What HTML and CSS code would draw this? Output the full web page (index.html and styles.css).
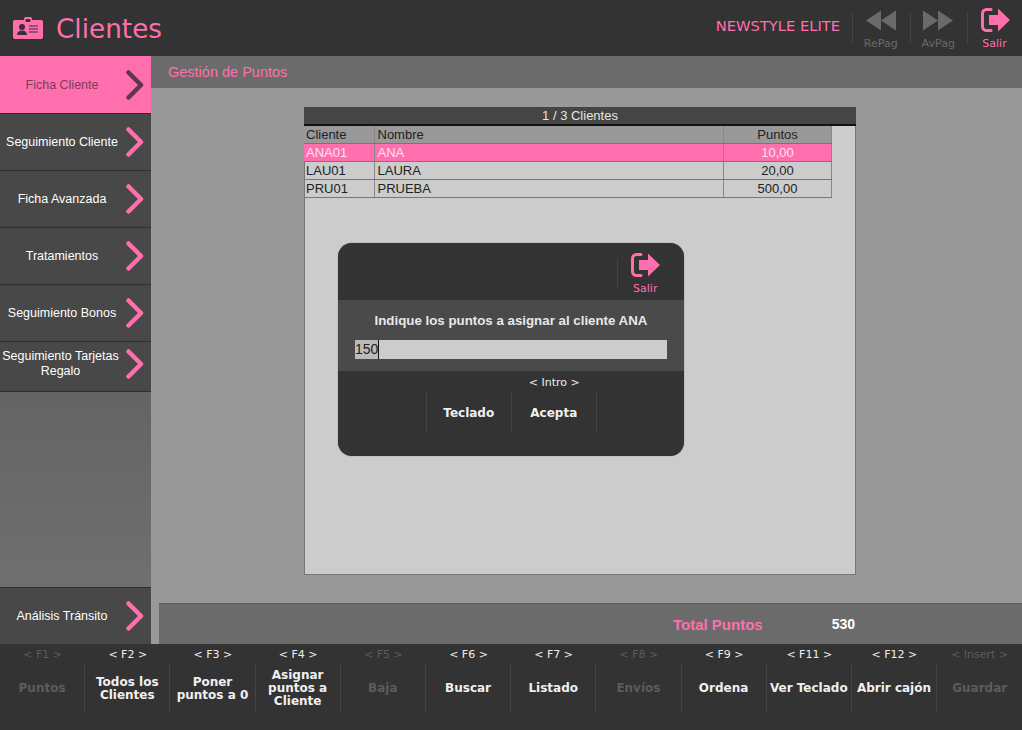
FILE: index.html
```html
<!DOCTYPE html>
<html lang="es">
<head>
    <meta charset="UTF-8">
    <title>Clientes</title>
    <link rel="stylesheet" href="styles.css">
</head>
<body>
    <svg class="defs" width="0" height="0" aria-hidden="true">
        <symbol id="exit" viewBox="0 0 30 26">
            <path d="M11 2.5H6.5A4 4 0 0 0 2.5 6.5v13a4 4 0 0 0 4 4H11" fill="none" stroke="currentColor" stroke-width="3" stroke-linecap="round"/>
            <path d="M9 8h9V1.5L30 13 18 24.5V18H9z" fill="currentColor"/>
        </symbol>
        <symbol id="chevron" viewBox="0 0 18 30">
            <path d="M2.5 2.500L15 15 2.500 27.500" fill="none" stroke="currentColor" stroke-width="4.500" stroke-linecap="round" stroke-linejoin="round"/>
        </symbol>
    </svg>

    <header class="topbar">
        <svg class="card-icon" viewBox="0 0 30 24" aria-hidden="true">
            <path d="M2 4h9V3a2 2 0 0 1 2-2h4a2 2 0 0 1 2 2v1h9a2 2 0 0 1 2 2v15a2 2 0 0 1-2 2H2a2 2 0 0 1-2-2V6a2 2 0 0 1 2-2z" fill="#ff6fae"/>
            <rect x="12.500" y="3" width="5" height="3" rx="1" fill="#333"/>
            <circle cx="9" cy="11" r="3" fill="#333"/>
            <path d="M4 19c0-3 2-4.500 5-4.500s5 1.500 5 4.500z" fill="#333"/>
            <path d="M16 10h9M16 13h9M16 16h9" stroke="#333" stroke-width="1.200"/>
        </svg>
        <h1 class="app-title">Clientes</h1>
        <span class="brand">NEWSTYLE ELITE</span>
        <div class="tool off">
            <svg class="tool-icon" viewBox="0 0 30 20" aria-hidden="true"><path d="M15 0v20L0 10zM30 0v20L15 10z" fill="currentColor"/></svg>
            <span>RePag</span>
        </div>
        <div class="tool off">
            <svg class="tool-icon" viewBox="0 0 30 20" aria-hidden="true"><path d="M0 0v20l15-10zM15 0v20l15-10z" fill="currentColor"/></svg>
            <span>AvPag</span>
        </div>
        <div class="tool exit">
            <svg class="exit-icon"><use href="#exit"/></svg>
            <span>Salir</span>
        </div>
    </header>

    <div class="middle">
        <nav class="sidebar">
            <a class="side-item active"><span>Ficha Cliente</span><svg class="chevron"><use href="#chevron"/></svg></a>
            <a class="side-item"><span>Seguimiento Cliente</span><svg class="chevron"><use href="#chevron"/></svg></a>
            <a class="side-item"><span>Ficha Avanzada</span><svg class="chevron"><use href="#chevron"/></svg></a>
            <a class="side-item"><span>Tratamientos</span><svg class="chevron"><use href="#chevron"/></svg></a>
            <a class="side-item"><span>Seguimiento Bonos</span><svg class="chevron"><use href="#chevron"/></svg></a>
            <a class="side-item short"><span>Seguimiento Tarjetas Regalo</span><svg class="chevron"><use href="#chevron"/></svg></a>
            <a class="side-item bottom"><span>Análisis Tránsito</span><svg class="chevron"><use href="#chevron"/></svg></a>
        </nav>

        <main class="content">
            <div class="section-title">Gestión de Puntos</div>
            <div class="workarea">
                <section class="panel">
                    <div class="panel-head">1 / 3 Clientes</div>
                    <table class="grid">
                        <colgroup><col class="col-code"><col><col class="col-points"></colgroup>
                        <thead>
                            <tr><th>Cliente</th><th>Nombre</th><th class="num">Puntos</th></tr>
                        </thead>
                        <tbody>
                            <tr class="selected"><td>ANA01</td><td>ANA</td><td class="num">10,00</td></tr>
                            <tr><td>LAU01</td><td>LAURA</td><td class="num">20,00</td></tr>
                            <tr><td>PRU01</td><td>PRUEBA</td><td class="num">500,00</td></tr>
                        </tbody>
                    </table>
                </section>
            </div>
            <div class="totals">
                <span class="total-label">Total Puntos</span>
                <span class="total-value">530</span>
            </div>
        </main>
    </div>

    <footer class="fkeys">
        <div class="fkey off"><span class="key">&lt; F1 &gt;</span><span class="action">Puntos</span></div>
        <div class="fkey"><span class="key">&lt; F2 &gt;</span><span class="action">Todos los Clientes</span></div>
        <div class="fkey"><span class="key">&lt; F3 &gt;</span><span class="action">Poner puntos a 0</span></div>
        <div class="fkey"><span class="key">&lt; F4 &gt;</span><span class="action">Asignar puntos a Cliente</span></div>
        <div class="fkey off"><span class="key">&lt; F5 &gt;</span><span class="action">Baja</span></div>
        <div class="fkey"><span class="key">&lt; F6 &gt;</span><span class="action">Buscar</span></div>
        <div class="fkey"><span class="key">&lt; F7 &gt;</span><span class="action">Listado</span></div>
        <div class="fkey off"><span class="key">&lt; F8 &gt;</span><span class="action">Envíos</span></div>
        <div class="fkey"><span class="key">&lt; F9 &gt;</span><span class="action">Ordena</span></div>
        <div class="fkey"><span class="key">&lt; F11 &gt;</span><span class="action">Ver Teclado</span></div>
        <div class="fkey"><span class="key">&lt; F12 &gt;</span><span class="action">Abrir cajón</span></div>
        <div class="fkey off"><span class="key">&lt; Insert &gt;</span><span class="action">Guardar</span></div>
    </footer>

    <div class="modal">
        <div class="modal-top">
            <div class="tool exit">
                <svg class="exit-icon"><use href="#exit"/></svg>
                <span>Salir</span>
            </div>
        </div>
        <div class="modal-body">
            <p class="modal-text">Indique los puntos a asignar al cliente ANA</p>
            <div class="modal-input"><span class="typed">150</span></div>
        </div>
        <div class="modal-actions">
            <div class="modal-btn"><span class="action">Teclado</span></div>
            <div class="modal-btn"><span class="key">&lt; Intro &gt;</span><span class="action">Acepta</span></div>
        </div>
    </div>
</body>
</html>
```

FILE: styles.css
```css
:root {
    --pink: #ff6fae;
    --dark: #333333;
    --sep: #454545;
}
* {
    box-sizing: border-box;
}
html, body {
    height: 100%;
}
body {
    margin: 0;
    display: flex;
    flex-direction: column;
    height: 730px;
    overflow: hidden;
    background-color: var(--dark);
    font-family: "Liberation Sans", Arial, sans-serif;
    color: #ffffff;
}
.defs {
    position: absolute;
}

/* top bar */
.topbar {
    height: 56px;
    flex: none;
    display: flex;
    align-items: center;
    padding: 0 0 0 13px;
    background-color: var(--dark);
}
.card-icon {
    width: 30px;
    height: 24px;
    margin-top: -1px;
}
.app-title {
    margin: 1px 0 0 13px;
    font-family: "DejaVu Sans", Verdana, sans-serif;
    font-size: 26.300px;
    font-weight: 400;
    color: var(--pink);
    flex: 1;
}
.brand {
    font-family: "DejaVu Sans", Verdana, sans-serif;
    font-size: 14.700px;
    color: var(--pink);
    margin: -5px 12px 0 0;
}
.tool {
    position: relative;
    width: 57.500px;
    height: 43px;
    flex: none;
    display: flex;
    flex-direction: column;
    align-items: center;
    justify-content: space-between;
    font-family: "DejaVu Sans", Verdana, sans-serif;
    font-size: 11px;
    line-height: 13px;
}
.topbar .tool {
    align-self: flex-start;
    margin-top: 7px;
}
.tool::before {
    content: "";
    position: absolute;
    left: 0;
    top: 6px;
    height: 30px;
    border-left: 1px solid var(--sep);
}
.tool.off {
    color: #6a6a6a;
}
.tool.exit {
    color: var(--pink);
}
.topbar .tool.exit {
    width: 55px;
}
.tool-icon {
    width: 30px;
    height: 21px;
    margin-top: 3px;
}
.exit-icon {
    width: 30px;
    height: 26px;
}

/* middle */
.middle {
    flex: 1;
    display: flex;
    min-height: 0;
}
.sidebar {
    width: 151px;
    flex: none;
    display: flex;
    flex-direction: column;
    background: linear-gradient(#505050, #737373);
}
.side-item {
    height: 57px;
    flex: none;
    display: flex;
    align-items: center;
    border-bottom: 1px solid #2f2f2f;
    background-color: #484848;
    font-size: 12.500px;
    color: #ffffff;
    text-align: center;
}
.side-item span {
    flex: 1;
}
.side-item.active {
    height: 58px;
    background-color: var(--pink);
    color: #7a3d5c;
}
.side-item.short {
    height: 50px;
    padding-bottom: 6px;
    line-height: 15px;
}
.side-item.short span {
    padding-right: 3px;
}
.side-item.bottom {
    margin-top: auto;
    height: 57px;
    border-top: 1px solid #2f2f2f;
    border-bottom: none;
}
.chevron {
    width: 18px;
    height: 30px;
    margin: 0 7px 0 2px;
    flex: none;
    color: var(--pink);
}
.side-item.active .chevron {
    color: #5f3650;
}

/* content */
.content {
    flex: 1;
    display: flex;
    flex-direction: column;
    background-color: #999999;
}
.section-title {
    height: 32px;
    flex: none;
    padding: 8px 0 0 17px;
    background-color: #6b6b6b;
    font-size: 14.500px;
    color: var(--pink);
}
.workarea {
    flex: 1;
    padding: 19px 166px 28px 153px;
}
.panel {
    height: 100%;
    background-color: #cccccc;
    border: 1px solid #777777;
    border-top: none;
}
.panel-head {
    height: 19px;
    margin: 0 -1px;
    border-bottom: 2px solid #111111;
    background-color: #454545;
    font-size: 13px;
    line-height: 18px;
    text-align: center;
    color: #e6e6e6;
}
.grid {
    width: 528px;
    margin-left: -1px;
    table-layout: fixed;
    border-collapse: collapse;
    font-size: 13px;
    color: #222222;
}
.col-code {
    width: 70px;
}
.col-points {
    width: 108px;
}
.grid th, .grid td {
    height: 18px;
    padding: 1px 2px 0;
    font-weight: 400;
    text-align: left;
    border-right: 1px solid #888888;
    border-bottom: 1px solid #777777;
}
.grid th + th, .grid td + td {
    padding-left: 3px;
}
.grid th {
    height: 17px;
    background-color: #999999;
}
.grid .num {
    text-align: center;
    padding-left: 2px;
}
.selected td {
    background-color: var(--pink);
    color: #ffe3ef;
}

.totals {
    height: 41px;
    flex: none;
    margin-left: 8px;
    display: flex;
    align-items: center;
    justify-content: flex-end;
    padding-right: 167px;
    background-color: #6b6b6b;
    border-top: 1px solid #5c5c5c;
    font-size: 14px;
    font-weight: 700;
}
.total-label {
    color: var(--pink);
    font-size: 15px;
    margin-right: 69px;
}

/* function keys */
.fkeys {
    height: 86px;
    flex: none;
    display: flex;
    padding-top: 4px;
    background-color: var(--dark);
}
.fkey {
    width: 85.200px;
    flex: none;
    display: flex;
    flex-direction: column;
    align-items: center;
}
.key {
    height: 13px;
    font-family: "DejaVu Sans", Verdana, sans-serif;
    font-size: 11px;
    line-height: 13px;
    white-space: nowrap;
    color: #eeeeee;
}
.action {
    height: 48px;
    width: 100%;
    margin-top: 3px;
    padding: 1px 1px 0;
    display: flex;
    align-items: center;
    justify-content: center;
    border-right: 1px solid var(--sep);
    font-family: "DejaVu Sans", Verdana, sans-serif;
    font-size: 12px;
    font-weight: 700;
    line-height: 13px;
    text-align: center;
    color: #f0f0f0;
}
.fkey:last-child .action {
    border-right: none;
}
.off .key, .off .action {
    color: #5c5c5c;
}

/* modal */
.modal {
    position: absolute;
    left: 338px;
    top: 243px;
    width: 346px;
    height: 213px;
    border-radius: 14px;
    overflow: hidden;
    background-color: var(--dark);
    box-shadow: 0 0 1px #555555;
}
.modal-top {
    height: 57px;
    display: flex;
    justify-content: flex-end;
    padding: 9px 10px 0 0;
}
.modal-body {
    height: 71px;
    background-color: #4a4a4a;
    padding-top: 13px;
}
.modal-text {
    margin: 0;
    font-size: 13.300px;
    font-weight: 700;
    text-align: center;
    color: #e8e8e8;
}
.modal-input {
    width: 312px;
    height: 19px;
    margin: 12px 0 0 17px;
    background-color: #cccccc;
    font-size: 14px;
    line-height: 19px;
    color: #222222;
}
.typed {
    display: inline-block;
    height: 19px;
    border-right: 1px solid #111111;
    background-color: #bbbbbb;
}
.modal-actions {
    display: flex;
    padding-left: 88px;
    padding-top: 5px;
}
.modal-btn {
    width: 85.500px;
    display: flex;
    flex-direction: column;
    align-items: center;
}
.modal-btn:first-child {
    padding-top: 16px;
}
.modal-btn .action {
    height: 40px;
    margin-top: 3px;
    padding-top: 2px;
}
.modal-btn:first-child .action {
    margin-top: 0;
    border-left: 1px solid var(--sep);
}
```
